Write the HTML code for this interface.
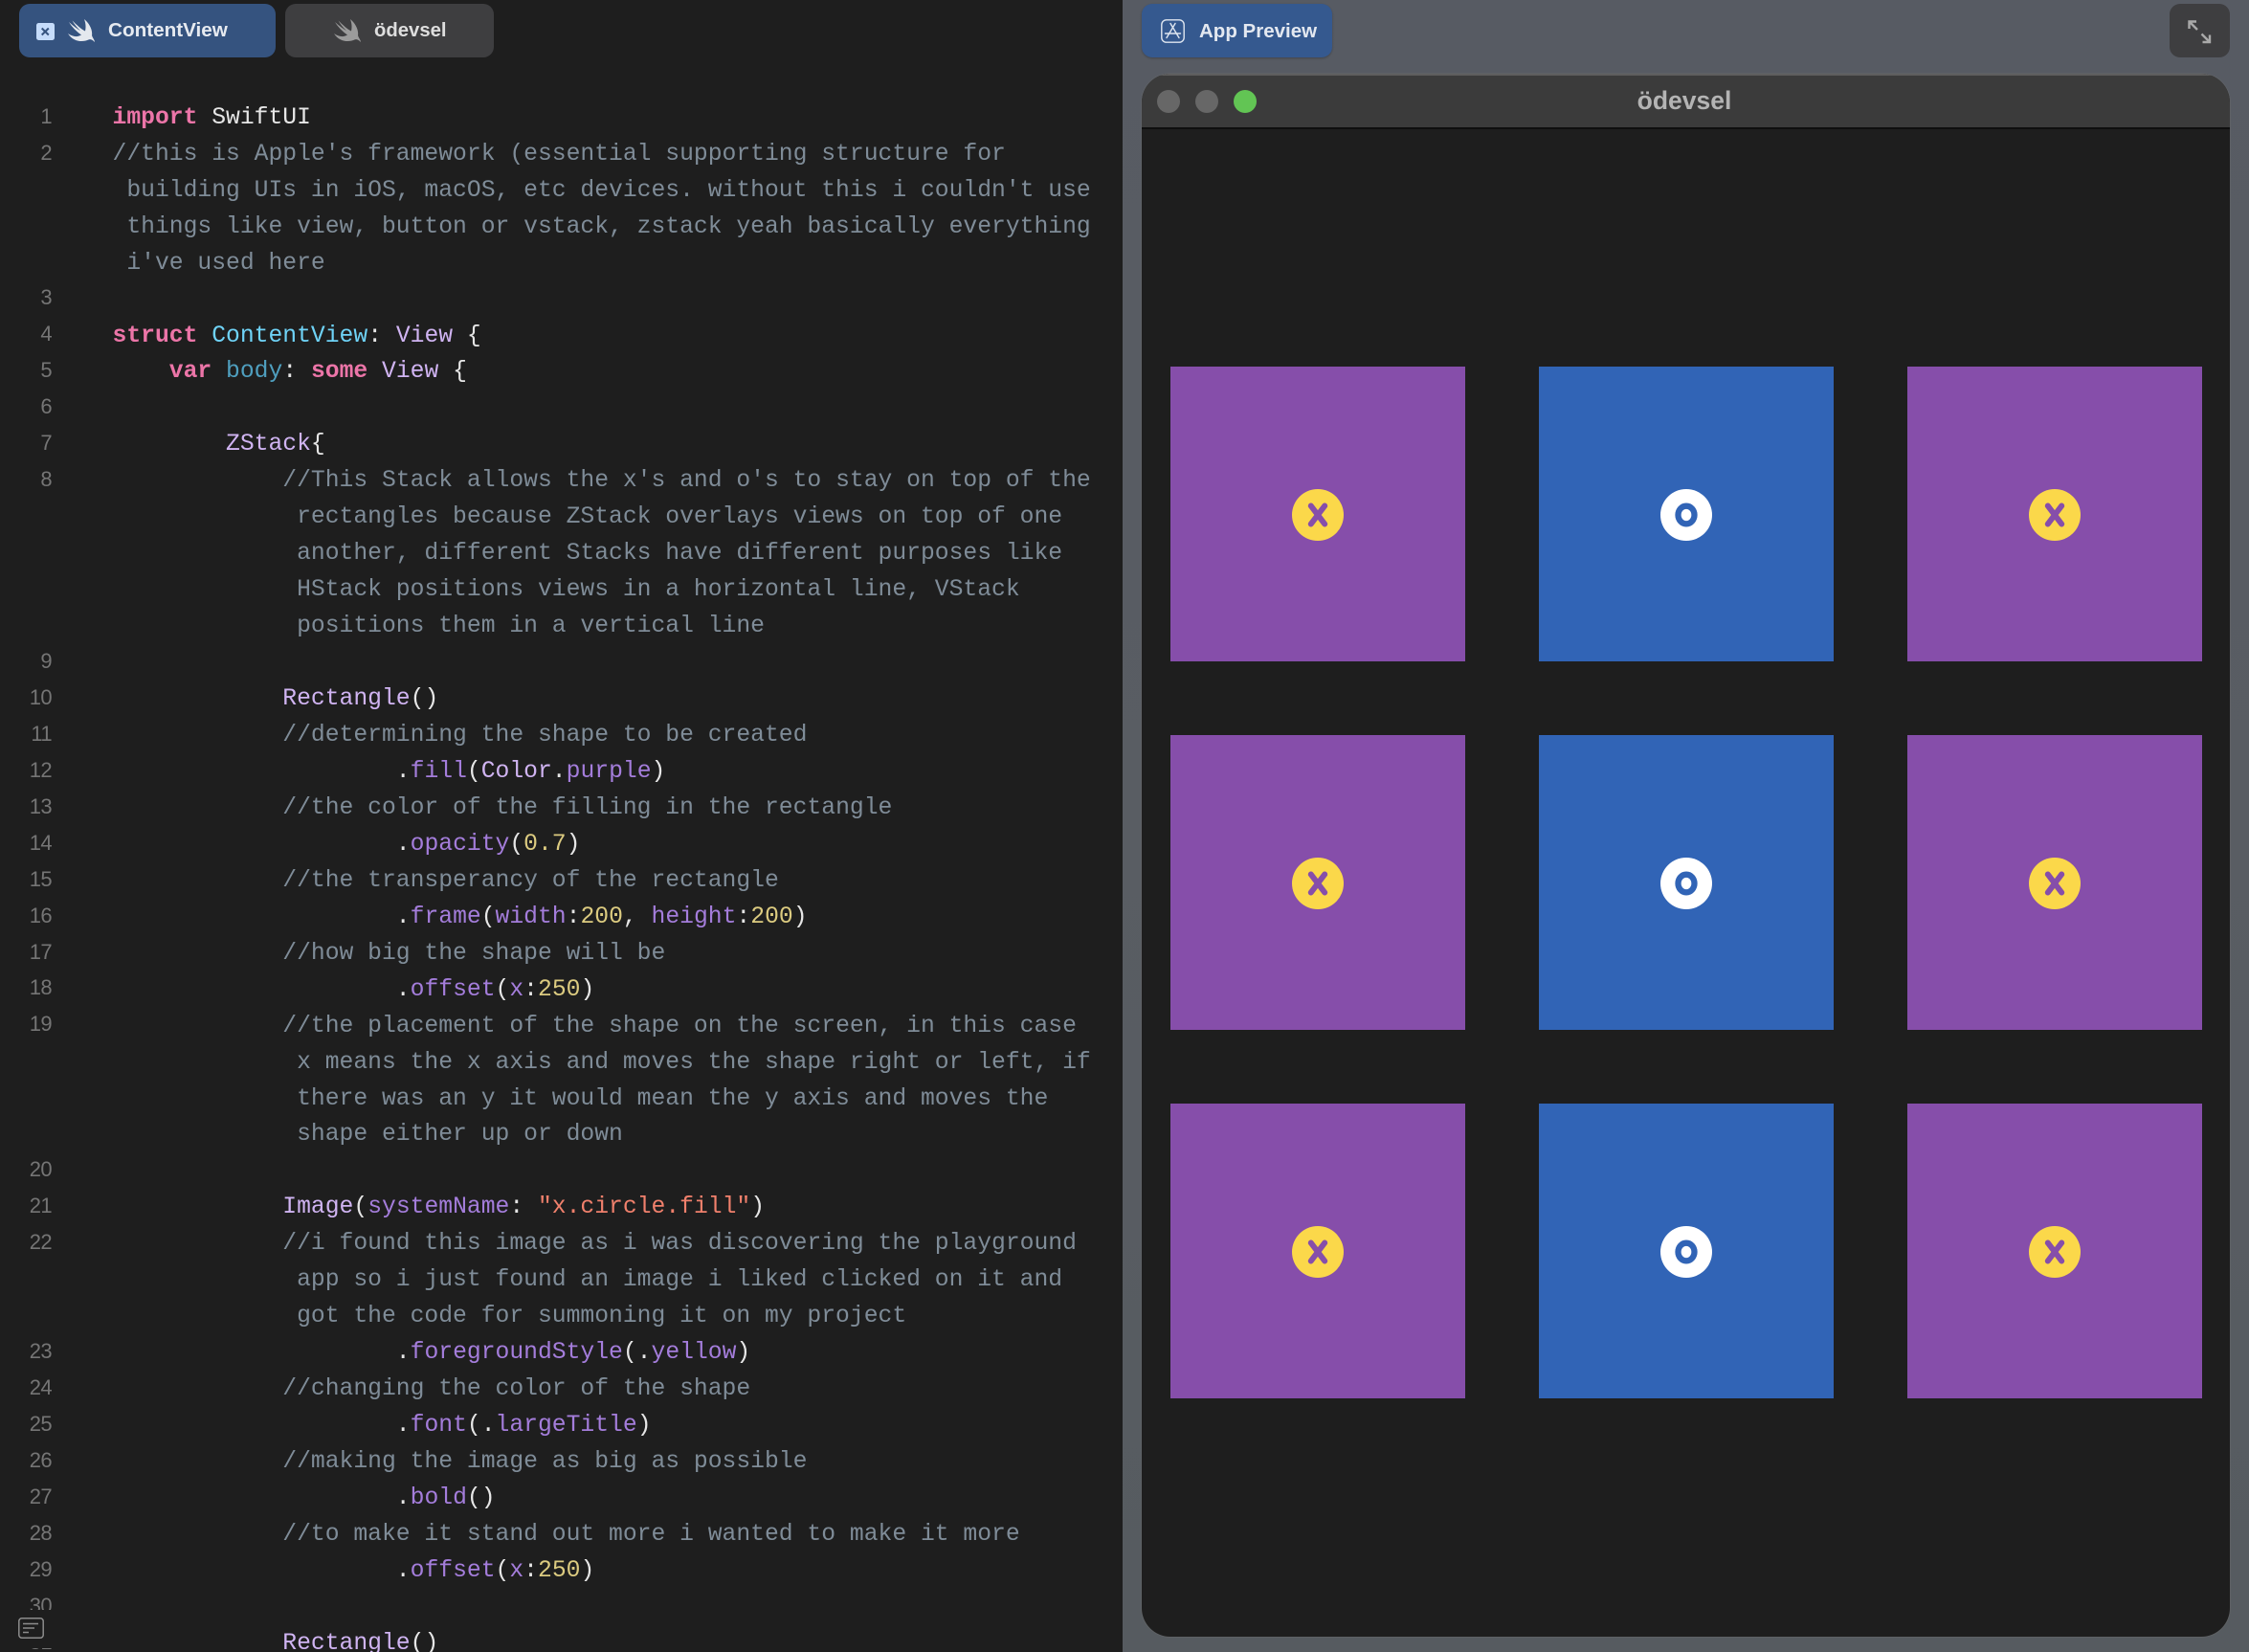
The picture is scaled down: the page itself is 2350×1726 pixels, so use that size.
<!DOCTYPE html>
<html><head><meta charset="utf-8">
<style>
*{margin:0;padding:0;box-sizing:border-box}
html,body{width:2350px;height:1726px;overflow:hidden;background:#1e1e1e}
body{position:relative;font-family:"Liberation Sans",sans-serif}
.abs{position:absolute}
pre{position:absolute;font-family:"Liberation Mono",monospace;font-size:24.7px;line-height:37.96px;white-space:pre;color:#e6e6e6}
#code{left:117.5px;top:104.8px}
#nums{left:20px;width:34px;top:102.6px;text-align:right;font-family:"Liberation Sans",sans-serif;font-size:22px;letter-spacing:-.6px;color:#757575}
.k{color:#ec75a8;font-weight:bold}.c{color:#7f8c98}.p{color:#a47ddb}.t{color:#d0b4f2}.n{color:#dccb80}.s{color:#f0806c}.d{color:#6fd3f7}.b{color:#4f9fbf}
.tab{position:absolute;top:4px;height:56px;border-radius:11px}
.lbl{position:absolute;font-weight:bold;line-height:28px;white-space:nowrap}
.sq{position:absolute;width:308px;height:308px}
.pu{background:#864eaa}.bl{background:#3164b6}
.sq svg{position:absolute;left:127px;top:127.5px;width:54px;height:54px}
</style></head>
<body>
<pre id="nums">1
2



3
4
5
6
7
8




9
10
11
12
13
14
15
16
17
18
19



20
21
22


23
24
25
26
27
28
29
30
31</pre>
<pre id="code"><span class="k">import</span> SwiftUI
<span class="c">//this is Apple's framework (essential supporting structure for
 building UIs in iOS, macOS, etc devices. without this i couldn't use
 things like view, button or vstack, zstack yeah basically everything
 i've used here</span>

<span class="k">struct</span> <span class="d">ContentView</span>: <span class="t">View</span> {
    <span class="k">var</span> <span class="b">body</span>: <span class="k">some</span> <span class="t">View</span> {

        <span class="t">ZStack</span>{
            <span class="c">//This Stack allows the x's and o's to stay on top of the
             rectangles because ZStack overlays views on top of one
             another, different Stacks have different purposes like
             HStack positions views in a horizontal line, VStack
             positions them in a vertical line</span>

            <span class="t">Rectangle</span>()
            <span class="c">//determining the shape to be created</span>
                    .<span class="p">fill</span>(<span class="t">Color</span>.<span class="p">purple</span>)
            <span class="c">//the color of the filling in the rectangle</span>
                    .<span class="p">opacity</span>(<span class="n">0.7</span>)
            <span class="c">//the transperancy of the rectangle</span>
                    .<span class="p">frame</span>(<span class="p">width</span>:<span class="n">200</span>, <span class="p">height</span>:<span class="n">200</span>)
            <span class="c">//how big the shape will be</span>
                    .<span class="p">offset</span>(<span class="p">x</span>:<span class="n">250</span>)
            <span class="c">//the placement of the shape on the screen, in this case
             x means the x axis and moves the shape right or left, if
             there was an y it would mean the y axis and moves the
             shape either up or down</span>

            <span class="t">Image</span>(<span class="p">systemName</span>: <span class="s">"x.circle.fill"</span>)
            <span class="c">//i found this image as i was discovering the playground
             app so i just found an image i liked clicked on it and
             got the code for summoning it on my project</span>
                    .<span class="p">foregroundStyle</span>(.<span class="p">yellow</span>)
            <span class="c">//changing the color of the shape</span>
                    .<span class="p">font</span>(.<span class="p">largeTitle</span>)
            <span class="c">//making the image as big as possible</span>
                    .<span class="p">bold</span>()
            <span class="c">//to make it stand out more i wanted to make it more</span>
                    .<span class="p">offset</span>(<span class="p">x</span>:<span class="n">250</span>)

            <span class="t">Rectangle</span>()</pre>

<!-- bottom-left editor icon -->
<div class="abs" style="left:8px;top:1682px;width:50px;height:40px;background:#1e1e1e"></div>
<svg class="abs" style="left:19px;top:1690px" width="27" height="22" viewBox="0 0 27 22" fill="none" stroke="#8c8c8c" stroke-width="1.5"><rect x=".8" y=".8" width="25.4" height="20.4" rx="3"/><path d="M5 6.5H21M5 11H17M5 15.5H11"/></svg>

<!-- tabs -->
<div class="tab" style="left:20px;width:268px;background:#35537f"></div>
<div class="abs" style="left:38px;top:24px;width:18.5px;height:18px;border-radius:2.5px;background:#c5dcfb"></div>
<svg class="abs" style="left:38px;top:24px" width="18.5" height="18" viewBox="0 0 18.5 18"><path d="M5.7 5.5L12.8 12.5M12.8 5.5L5.7 12.5" stroke="#35537f" stroke-width="2"/></svg>
<svg class="abs" style="left:71px;top:20px" width="28" height="24" viewBox="0 0 28 24"><path fill="#e4e8ee" d="M17 0C22 4 26 11 25 17C26 20 28 22 28 24C26 22 24 20.5 21.5 21.5C16 24 6 24.5 0 15C5 18.5 10 19 14 16.5C9 13 4 8 1 3C6 7.5 10 10.5 13 12C9.5 9 6.5 5 4.5 1.5C9 6 14 10.5 18 12.5C19 8 18.5 4 17 0Z"/></svg>
<div class="lbl" style="left:113px;top:18px;font-size:20.7px;color:#e6eaf0">ContentView</div>

<div class="tab" style="left:298px;width:218px;background:#3e3e40"></div>
<svg class="abs" style="left:349px;top:20px" width="28" height="24" viewBox="0 0 28 24"><path fill="#9b9b9b" d="M17 0C22 4 26 11 25 17C26 20 28 22 28 24C26 22 24 20.5 21.5 21.5C16 24 6 24.5 0 15C5 18.5 10 19 14 16.5C9 13 4 8 1 3C6 7.5 10 10.5 13 12C9.5 9 6.5 5 4.5 1.5C9 6 14 10.5 18 12.5C19 8 18.5 4 17 0Z"/></svg>
<div class="lbl" style="left:391px;top:18px;font-size:20.3px;color:#dedede">ödevsel</div>

<!-- right panel -->
<div class="abs" style="left:1173px;top:0;width:1177px;height:1726px;background:linear-gradient(180deg,#575b63 0%,#595d63 50%,#565b60 100%)"></div>

<div class="tab" style="left:1193px;width:199px;background:#35598f;box-shadow:0 1px 2px rgba(0,0,0,.25)"></div>
<svg class="abs" style="left:1213px;top:20px" width="25" height="25" viewBox="0 0 25 25" fill="none" stroke="#dfe6f0" stroke-width="1.4" stroke-linecap="round"><rect x=".8" y=".8" width="23.4" height="23.4" rx="5"/><path d="M10 4.5L19 19.5M15 4.5L6 19.5M4.5 15H20.5"/></svg>
<div class="lbl" style="left:1253px;top:19px;font-size:20.5px;color:#e3e8f0">App Preview</div>

<div class="tab" style="left:2267px;width:63px;background:#3e3e40"></div>
<svg class="abs" style="left:2284px;top:19px" width="28" height="28" viewBox="0 0 28 28" fill="none" stroke="#a9a9a9" stroke-width="2.4"><path d="M3.5 11V3.5H11M3.5 3.5L12 12M25 17.5V25H17.5M25 25L16.5 16.5"/></svg>

<!-- preview window -->
<div class="abs" style="left:1193px;top:77px;width:1137px;height:1633px;border-radius:30px;background:#1e1e1e;overflow:hidden;box-shadow:0 0 0 1px rgba(110,110,110,.35)">
  <div class="abs" style="left:0;top:0;width:100%;height:57.5px;background:#3b3b3b;border-top:2px solid #5e5e5e;border-bottom:2px solid #0e0e0e"></div>
</div>
<div class="abs" style="left:1209px;top:94px;width:24px;height:24px;border-radius:50%;background:#676767"></div>
<div class="abs" style="left:1249px;top:94px;width:24px;height:24px;border-radius:50%;background:#676767"></div>
<div class="abs" style="left:1289px;top:94px;width:24px;height:24px;border-radius:50%;background:#62c554"></div>
<div class="lbl" style="left:1593px;width:334px;text-align:center;top:91px;font-size:26.5px;color:#b4b4b4">ödevsel</div>

<!-- grid -->
<div class="sq pu" style="left:1223px;top:383px"><svg viewBox="0 0 54 54"><circle cx="27" cy="27" r="27" fill="#fbd84a"/><path d="M19.8 17.5L34.2 36.5M34.2 17.5L19.8 36.5" stroke="#864eaa" stroke-width="6" stroke-linecap="round"/></svg></div>
<div class="sq bl" style="left:1608px;top:383px"><svg viewBox="0 0 54 54"><circle cx="27" cy="27" r="27" fill="#fff"/><ellipse cx="27" cy="27" rx="8.5" ry="9.3" fill="none" stroke="#3164b6" stroke-width="6.3"/></svg></div>
<div class="sq pu" style="left:1993px;top:383px"><svg viewBox="0 0 54 54"><circle cx="27" cy="27" r="27" fill="#fbd84a"/><path d="M19.8 17.5L34.2 36.5M34.2 17.5L19.8 36.5" stroke="#864eaa" stroke-width="6" stroke-linecap="round"/></svg></div>

<div class="sq pu" style="left:1223px;top:768px"><svg viewBox="0 0 54 54"><circle cx="27" cy="27" r="27" fill="#fbd84a"/><path d="M19.8 17.5L34.2 36.5M34.2 17.5L19.8 36.5" stroke="#864eaa" stroke-width="6" stroke-linecap="round"/></svg></div>
<div class="sq bl" style="left:1608px;top:768px"><svg viewBox="0 0 54 54"><circle cx="27" cy="27" r="27" fill="#fff"/><ellipse cx="27" cy="27" rx="8.5" ry="9.3" fill="none" stroke="#3164b6" stroke-width="6.3"/></svg></div>
<div class="sq pu" style="left:1993px;top:768px"><svg viewBox="0 0 54 54"><circle cx="27" cy="27" r="27" fill="#fbd84a"/><path d="M19.8 17.5L34.2 36.5M34.2 17.5L19.8 36.5" stroke="#864eaa" stroke-width="6" stroke-linecap="round"/></svg></div>

<div class="sq pu" style="left:1223px;top:1153px"><svg viewBox="0 0 54 54"><circle cx="27" cy="27" r="27" fill="#fbd84a"/><path d="M19.8 17.5L34.2 36.5M34.2 17.5L19.8 36.5" stroke="#864eaa" stroke-width="6" stroke-linecap="round"/></svg></div>
<div class="sq bl" style="left:1608px;top:1153px"><svg viewBox="0 0 54 54"><circle cx="27" cy="27" r="27" fill="#fff"/><ellipse cx="27" cy="27" rx="8.5" ry="9.3" fill="none" stroke="#3164b6" stroke-width="6.3"/></svg></div>
<div class="sq pu" style="left:1993px;top:1153px"><svg viewBox="0 0 54 54"><circle cx="27" cy="27" r="27" fill="#fbd84a"/><path d="M19.8 17.5L34.2 36.5M34.2 17.5L19.8 36.5" stroke="#864eaa" stroke-width="6" stroke-linecap="round"/></svg></div>
</body></html>
